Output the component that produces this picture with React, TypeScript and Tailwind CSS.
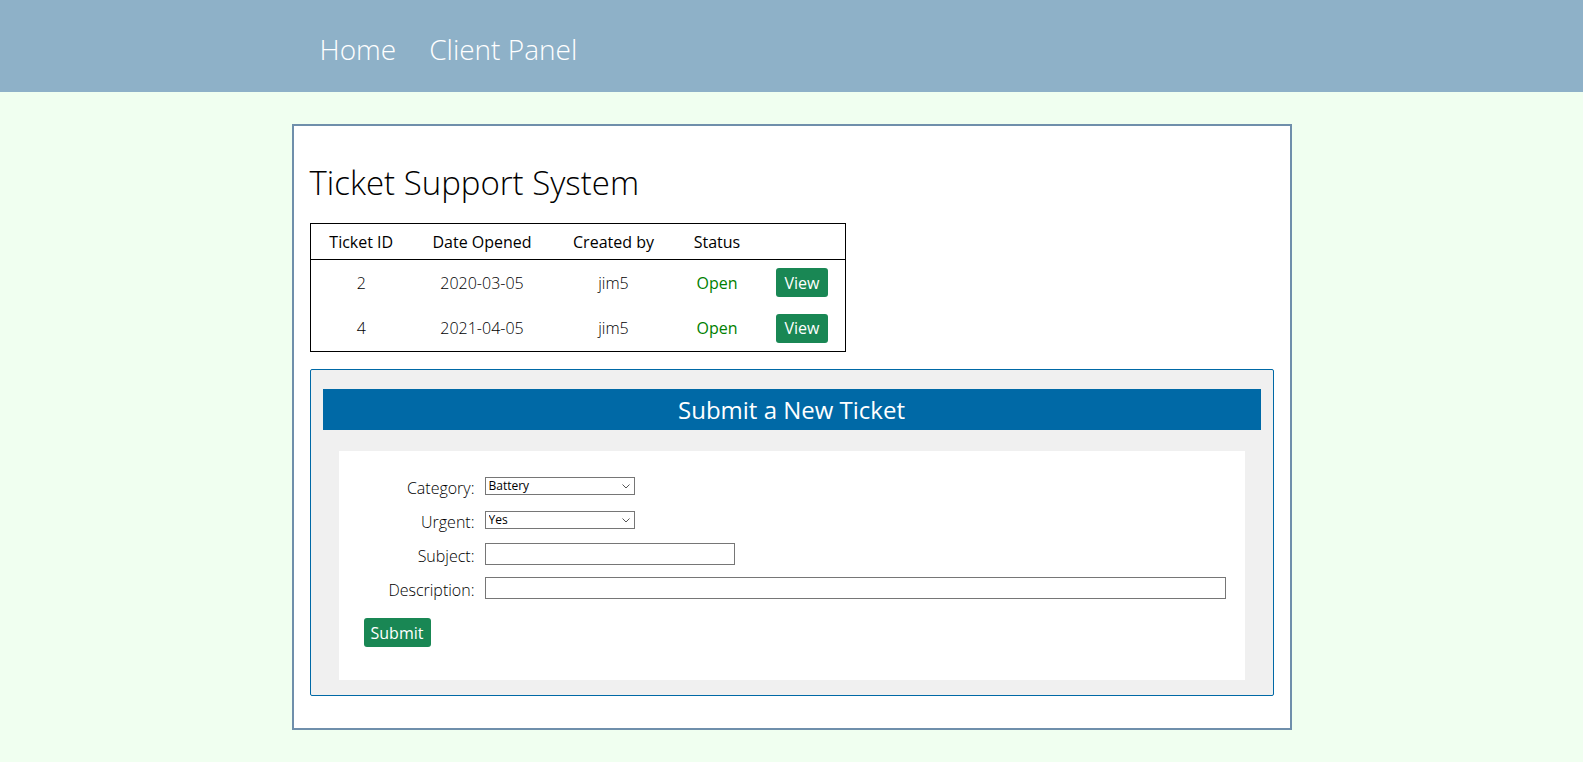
import React from 'react';

const tickets = [
  { id: 2, date: '2020-03-05', createdBy: 'jim5', status: 'Open' },
  { id: 4, date: '2021-04-05', createdBy: 'jim5', status: 'Open' },
];

function TicketTable() {
  return (
    <table className="w-[536px] table-fixed border-collapse border border-black">
      <colgroup>
        <col className="w-[102px]" />
        <col className="w-[140px]" />
        <col className="w-[123px]" />
        <col className="w-[84px]" />
        <col className="w-[86px]" />
      </colgroup>
      <thead>
        <tr className="border-b border-black">
          <th className="h-[36px] p-0 text-center font-normal">Ticket ID</th>
          <th className="h-[36px] p-0 text-center font-normal">Date Opened</th>
          <th className="h-[36px] p-0 text-center font-normal">Created by</th>
          <th className="h-[36px] p-0 text-center font-normal">Status</th>
          <th className="h-[36px] p-0" />
        </tr>
      </thead>
      <tbody>
        {tickets.map(t => (
          <tr key={t.id}>
            <td className="h-[46px] p-0 text-center font-light">{t.id}</td>
            <td className="h-[46px] p-0 text-center font-light">{t.date}</td>
            <td className="h-[46px] p-0 text-center font-light">{t.createdBy}</td>
            <td className="h-[46px] p-0 text-center text-[#008000]">{t.status}</td>
            <td className="h-[46px] p-0 pl-[17px]">
              <button className="block h-[29px] w-[52px] rounded-[3px] bg-[#198754] text-white">View</button>
            </td>
          </tr>
        ))}
      </tbody>
    </table>
  );
}

// select with the small grey chevron seen in the screenshot
function Select({ options }: { options: string[] }) {
  return (
    <div className="relative h-[18px] w-[150px]">
      <select className="block h-full w-full appearance-none border border-[#767676] bg-white pl-[3px] text-[12px] font-normal leading-[16px] text-black">
        {options.map(o => (
          <option key={o}>{o}</option>
        ))}
      </select>
      <svg
        className="pointer-events-none absolute right-[5px] top-[7px]"
        width="8"
        height="5"
        viewBox="0 0 8 5"
        fill="none"
      >
        <path d="M0.5 0.5L4 4L7.5 0.5" stroke="#555" strokeWidth="1" />
      </svg>
    </div>
  );
}

function NewTicketForm() {
  return (
    <div className="mt-[17px] rounded-[2px] border border-[#0069a6] bg-[#f0f0f0] pb-[15px] pt-[19px]">
      <div className="mx-[12px] flex h-[41px] items-center justify-center bg-[#0069a6] text-[24px] text-white">
        Submit a New Ticket
      </div>
      <div className="mx-[28px] mt-[21px] bg-white pb-[33px] pl-[25px] pt-[18px]">
        <div className="grid grid-cols-[111px_1fr] gap-x-[10px] font-light">
          <div className="flex h-[34px] items-center justify-end pt-[4px]">Category:</div>
          <div className="flex h-[34px] items-center">
            <Select options={['Battery', 'Screen', 'Software']} />
          </div>
          <div className="flex h-[34px] items-center justify-end pt-[4px]">Urgent:</div>
          <div className="flex h-[34px] items-center">
            <Select options={['Yes', 'No']} />
          </div>
          <div className="flex h-[34px] items-center justify-end pt-[4px]">Subject:</div>
          <div className="flex h-[34px] items-center">
            <input type="text" className="block h-[22px] w-[250px] border border-[#767676] bg-white" />
          </div>
          <div className="flex h-[33px] items-center justify-end pt-[4px]">Description:</div>
          <div className="flex h-[33px] items-center">
            <input type="text" className="block h-[22px] w-[741px] border border-[#767676] bg-white" />
          </div>
        </div>
        <button className="mt-[14px] block h-[29px] w-[67px] rounded-[3px] bg-[#198754] text-white">Submit</button>
      </div>
    </div>
  );
}

export default function App() {
  return (
    <div className="min-h-[762px] bg-[#f0fff0] font-['Open_Sans',sans-serif] text-[16px] text-black">
      <header className="h-[92px] bg-[#8eb1c8]">
        <nav className="mx-auto flex w-[1000px] gap-[33px] pl-[28px] pt-[28px] text-[28px] font-light text-white">
          <span>Home</span>
          <span>Client Panel</span>
        </nav>
      </header>
      <main className="mx-auto mt-[32px] w-[1000px] border-2 border-[#6f8fab] bg-white px-[16px] pb-[32px] pt-[34px]">
        <h1 className="mb-[18px] text-[33px] font-light leading-[45px]">Ticket Support System</h1>
        <TicketTable />
        <NewTicketForm />
      </main>
    </div>
  );
}
